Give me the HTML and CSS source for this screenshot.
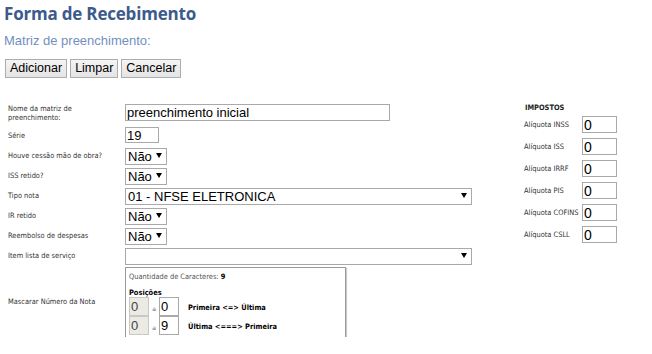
FILE: index.html
```html
<!DOCTYPE html>
<html lang="pt-BR">
<head>
    <meta charset="UTF-8">
    <title>Forma de Recebimento</title>
    <link rel="stylesheet" href="styles.css">
</head>
<body>
    <h1 class="page-title">Forma de Recebimento</h1>
    <p class="subtitle">Matriz de preenchimento:</p>

    <div class="toolbar">
        <button class="btn">Adicionar</button>
        <button class="btn">Limpar</button>
        <button class="btn">Cancelar</button>
    </div>

    <div class="content">
        <div class="form">
            <label class="lbl lbl-first">Nome da matriz de<br>preenchimento:</label>
            <div class="ctl ctl-first"><input class="field field-name" type="text" value="preenchimento inicial"></div>

            <label class="lbl">Série</label>
            <div class="ctl"><input class="field field-serie" type="text" value="19"></div>

            <label class="lbl">Houve cessão mão de obra?</label>
            <div class="ctl"><span class="sel sel-short"><select><option>Não</option></select></span></div>

            <label class="lbl">ISS retido?</label>
            <div class="ctl"><span class="sel sel-short"><select><option>Não</option></select></span></div>

            <label class="lbl">Tipo nota</label>
            <div class="ctl"><span class="sel sel-long"><select><option>01 - NFSE ELETRONICA</option></select></span></div>

            <label class="lbl">IR retido</label>
            <div class="ctl"><span class="sel sel-short"><select><option>Não</option></select></span></div>

            <label class="lbl">Reembolso de despesas</label>
            <div class="ctl"><span class="sel sel-short"><select><option>Não</option></select></span></div>

            <label class="lbl">Item lista de serviço</label>
            <div class="ctl"><span class="sel sel-long"><select><option></option></select></span></div>

            <label class="lbl lbl-mask">Mascarar Número da Nota</label>
            <div class="ctl ctl-mask">
                <div class="mask-box">
                    <div class="mask-count">Quantidade de Caracteres: <b>9</b></div>
                    <div class="mask-head">Posições</div>
                    <div class="mask-row">
                        <input class="field field-pos" type="text" value="0" disabled>
                        <span class="mask-a">a</span>
                        <input class="field field-pos" type="text" value="0">
                        <span class="mask-desc">Primeira &lt;=&gt; Última</span>
                    </div>
                    <div class="mask-row">
                        <input class="field field-pos" type="text" value="0" disabled>
                        <span class="mask-a">a</span>
                        <input class="field field-pos" type="text" value="9">
                        <span class="mask-desc">Última &lt;===&gt; Primeira</span>
                    </div>
                </div>
            </div>
        </div>

        <div class="taxes">
            <div class="taxes-title">IMPOSTOS</div>
            <div class="tax-grid">
                <label class="lbl">Alíquota INSS</label><input class="field field-tax" type="text" value="0">
                <label class="lbl">Alíquota ISS</label><input class="field field-tax" type="text" value="0">
                <label class="lbl">Alíquota IRRF</label><input class="field field-tax" type="text" value="0">
                <label class="lbl">Alíquota PIS</label><input class="field field-tax" type="text" value="0">
                <label class="lbl">Alíquota COFINS</label><input class="field field-tax" type="text" value="0">
                <label class="lbl">Alíquota CSLL</label><input class="field field-tax" type="text" value="0">
            </div>
        </div>
    </div>
</body>
</html>
```

FILE: styles.css
```css
body {
    margin: 0;
    padding: 4px 4px 0 4px;
    background: #fff;
    font-family: "Liberation Sans", Arial, sans-serif;
    color: #000;
}

.page-title {
    font-family: "Open Sans", sans-serif;
    font-weight: 700;
    font-size: 17px;
    line-height: 20px;
    color: #3d5a8c;
    margin: 0;
    letter-spacing: -0.2px;
}

.subtitle {
    font-size: 13px;
    line-height: 16px;
    color: #7090c0;
    margin: 9px 0 0 0;
}

.toolbar {
    display: flex;
    gap: 3px;
    margin: 10px 0 0 1px;
}

.btn {
    font-family: "Liberation Sans", Arial, sans-serif;
    font-size: 12.5px;
    height: 19px;
    padding: 0 4px;
    border: 1px solid #adadad;
    background: linear-gradient(#f4f4f4, #e4e4e4);
    color: #000;
    line-height: 17px;
}

.content {
    display: flex;
    margin-top: 23px;
}

.form {
    width: 516px;
    padding-left: 4px;
    display: grid;
    grid-template-columns: 117px 1fr;
    grid-template-rows: 24px repeat(7, 20px) 72px;
    align-items: center;
}

.lbl {
    font-family: "DejaVu Sans Condensed", "DejaVu Sans", Verdana, sans-serif;
    font-size: 7.4px;
    line-height: 9px;
    color: #333;
    align-self: center;
}

.lbl-first {
    align-self: start;
    padding-top: 3px;
}

.ctl {
    display: flex;
    align-items: center;
}

.ctl-first {
    align-self: start;
    padding-top: 3px;
}

.field {
    font-family: "Liberation Sans", Arial, sans-serif;
    font-size: 13px;
    height: 17px;
    box-sizing: border-box;
    border: 1px solid #a9a9a9;
    padding: 0 1px;
    color: #000;
    background: #fff;
    outline: none;
}

.field-name {
    width: 265px;
}

.field-serie {
    width: 34px;
    height: 16px;
}

.sel {
    position: relative;
    display: inline-block;
    height: 17px;
}

.sel select {
    appearance: none;
    -webkit-appearance: none;
    font-family: "Liberation Sans", Arial, sans-serif;
    font-size: 13px;
    height: 17px;
    width: 100%;
    box-sizing: border-box;
    border: 1px solid #a9a9a9;
    background: #fff;
    padding: 0 0 0 2px;
    color: #000;
    border-radius: 0;
}

.sel::after {
    content: "";
    position: absolute;
    right: 5px;
    top: 6px;
    border-left: 3px solid transparent;
    border-right: 3px solid transparent;
    border-top: 5px solid #000;
    pointer-events: none;
}

.sel-short {
    width: 42px;
}

.sel-long {
    width: 347px;
}

.ctl-mask {
    align-self: start;
    margin-top: 2px;
}

.mask-box {
    width: 221px;
    box-sizing: border-box;
    border: 1px solid #999;
    box-shadow: 1px 1px 1px #ccc;
    padding: 4px 2px 2px 3px;
}

.mask-count {
    font-family: "DejaVu Sans Condensed", "DejaVu Sans", Verdana, sans-serif;
    font-size: 7.4px;
    line-height: 9px;
    color: #555;
}

.mask-count b {
    color: #000;
}

.mask-head {
    font-family: "DejaVu Sans Condensed", "DejaVu Sans", Verdana, sans-serif;
    font-size: 7.4px;
    font-weight: 700;
    line-height: 9px;
    margin-top: 7px;
}

.mask-row {
    display: flex;
    align-items: center;
    height: 19px;
}

.field-pos {
    width: 20px;
    height: 19px;
}

.field-pos:disabled {
    background: #ebebe4;
    color: #444;
    border-color: #c8c8c8;
}

.mask-a {
    font-family: "DejaVu Sans", Verdana, sans-serif;
    font-size: 6px;
    color: #555;
    width: 10px;
    text-align: center;
    padding-top: 3px;
}

.mask-desc {
    font-family: "DejaVu Sans Condensed", "DejaVu Sans", Verdana, sans-serif;
    font-size: 7.4px;
    font-weight: 700;
    margin-left: 9px;
    padding-top: 2px;
}

.taxes {
    padding-top: 2px;
}

.taxes-title {
    font-family: "DejaVu Sans Condensed", "DejaVu Sans", Verdana, sans-serif;
    font-size: 7.4px;
    font-weight: 700;
    line-height: 9px;
    color: #222;
    margin-left: 1px;
}

.tax-grid {
    display: grid;
    grid-template-columns: 58px 35px;
    grid-auto-rows: 17px;
    row-gap: 5px;
    margin-top: 4px;
    align-items: center;
}

.field-tax {
    width: 35px;
    font-size: 14px;
}
```
